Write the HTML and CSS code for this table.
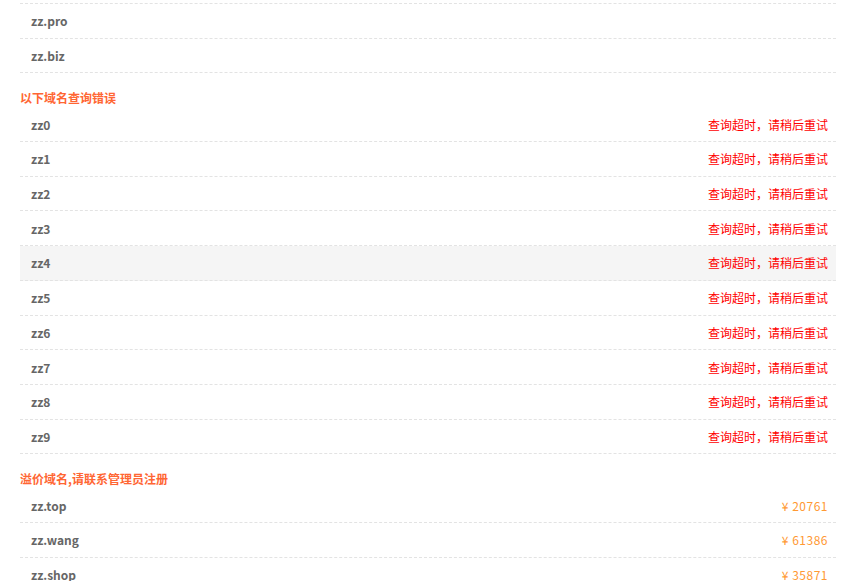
FILE: index.html
```html
<!DOCTYPE html>
<html lang="zh-CN">
<head>
    <meta charset="UTF-8">
    <meta name="viewport" content="width=device-width, initial-scale=1.0">
    <title>域名查询结果</title>
    <link rel="stylesheet" href="styles.css">
</head>
<body>

    <div class="result">
        <!-- 可注册域名 -->
        <ul class="domain-list first-list">
            <li><span class="name">zz.pro</span></li>
            <li><span class="name">zz.biz</span></li>
        </ul>

        <!-- 查询错误 -->
        <div class="group-title">以下域名查询错误</div>
        <ul class="domain-list">
            <li><span class="name">zz0</span><span class="error">查询超时，请稍后重试</span></li>
            <li><span class="name">zz1</span><span class="error">查询超时，请稍后重试</span></li>
            <li><span class="name">zz2</span><span class="error">查询超时，请稍后重试</span></li>
            <li><span class="name">zz3</span><span class="error">查询超时，请稍后重试</span></li>
            <li class="hover"><span class="name">zz4</span><span class="error">查询超时，请稍后重试</span></li>
            <li><span class="name">zz5</span><span class="error">查询超时，请稍后重试</span></li>
            <li><span class="name">zz6</span><span class="error">查询超时，请稍后重试</span></li>
            <li><span class="name">zz7</span><span class="error">查询超时，请稍后重试</span></li>
            <li><span class="name">zz8</span><span class="error">查询超时，请稍后重试</span></li>
            <li><span class="name">zz9</span><span class="error">查询超时，请稍后重试</span></li>
        </ul>

        <!-- 溢价域名 -->
        <div class="group-title">溢价域名,请联系管理员注册</div>
        <ul class="domain-list">
            <li><span class="name">zz.top</span><span class="price">¥ 20761</span></li>
            <li><span class="name">zz.wang</span><span class="price">¥ 61386</span></li>
            <li><span class="name">zz.shop</span><span class="price">¥ 35871</span></li>
        </ul>
    </div>

</body>
</html>
```

FILE: styles.css
```css
* {
    margin: 0;
    padding: 0;
    box-sizing: border-box;
}

body {
    font-family: "Microsoft YaHei", "Noto Sans CJK SC", sans-serif;
    font-size: 12px;
    color: #666;
    background-color: #fff;
}

.result {
    margin: 0 23px 0 20px;
}

/* 上一屏的列表，只露出最后两行 */
.first-list {
    margin-top: 3px;
    border-top: 1px dashed #e3e3e3;
}

.first-list li {
    height: 35px;
}

.domain-list {
    list-style: none;
}

.domain-list li {
    display: flex;
    justify-content: space-between;
    align-items: center;
    height: 34.7px;
    padding: 0 8px 0 11px;
    border-bottom: 1px dashed #e3e3e3;
}

.domain-list li.hover,
.domain-list li:hover {
    background-color: #f5f5f5;
}

.name {
    font-weight: 700;
    color: #666;
}

.error {
    color: #f00;
}

.price {
    color: #f93;
    letter-spacing: 0.5px;
}

.group-title {
    margin-top: 15px;
    line-height: 19px;
    font-weight: 700;
    color: #f63;
}
```
